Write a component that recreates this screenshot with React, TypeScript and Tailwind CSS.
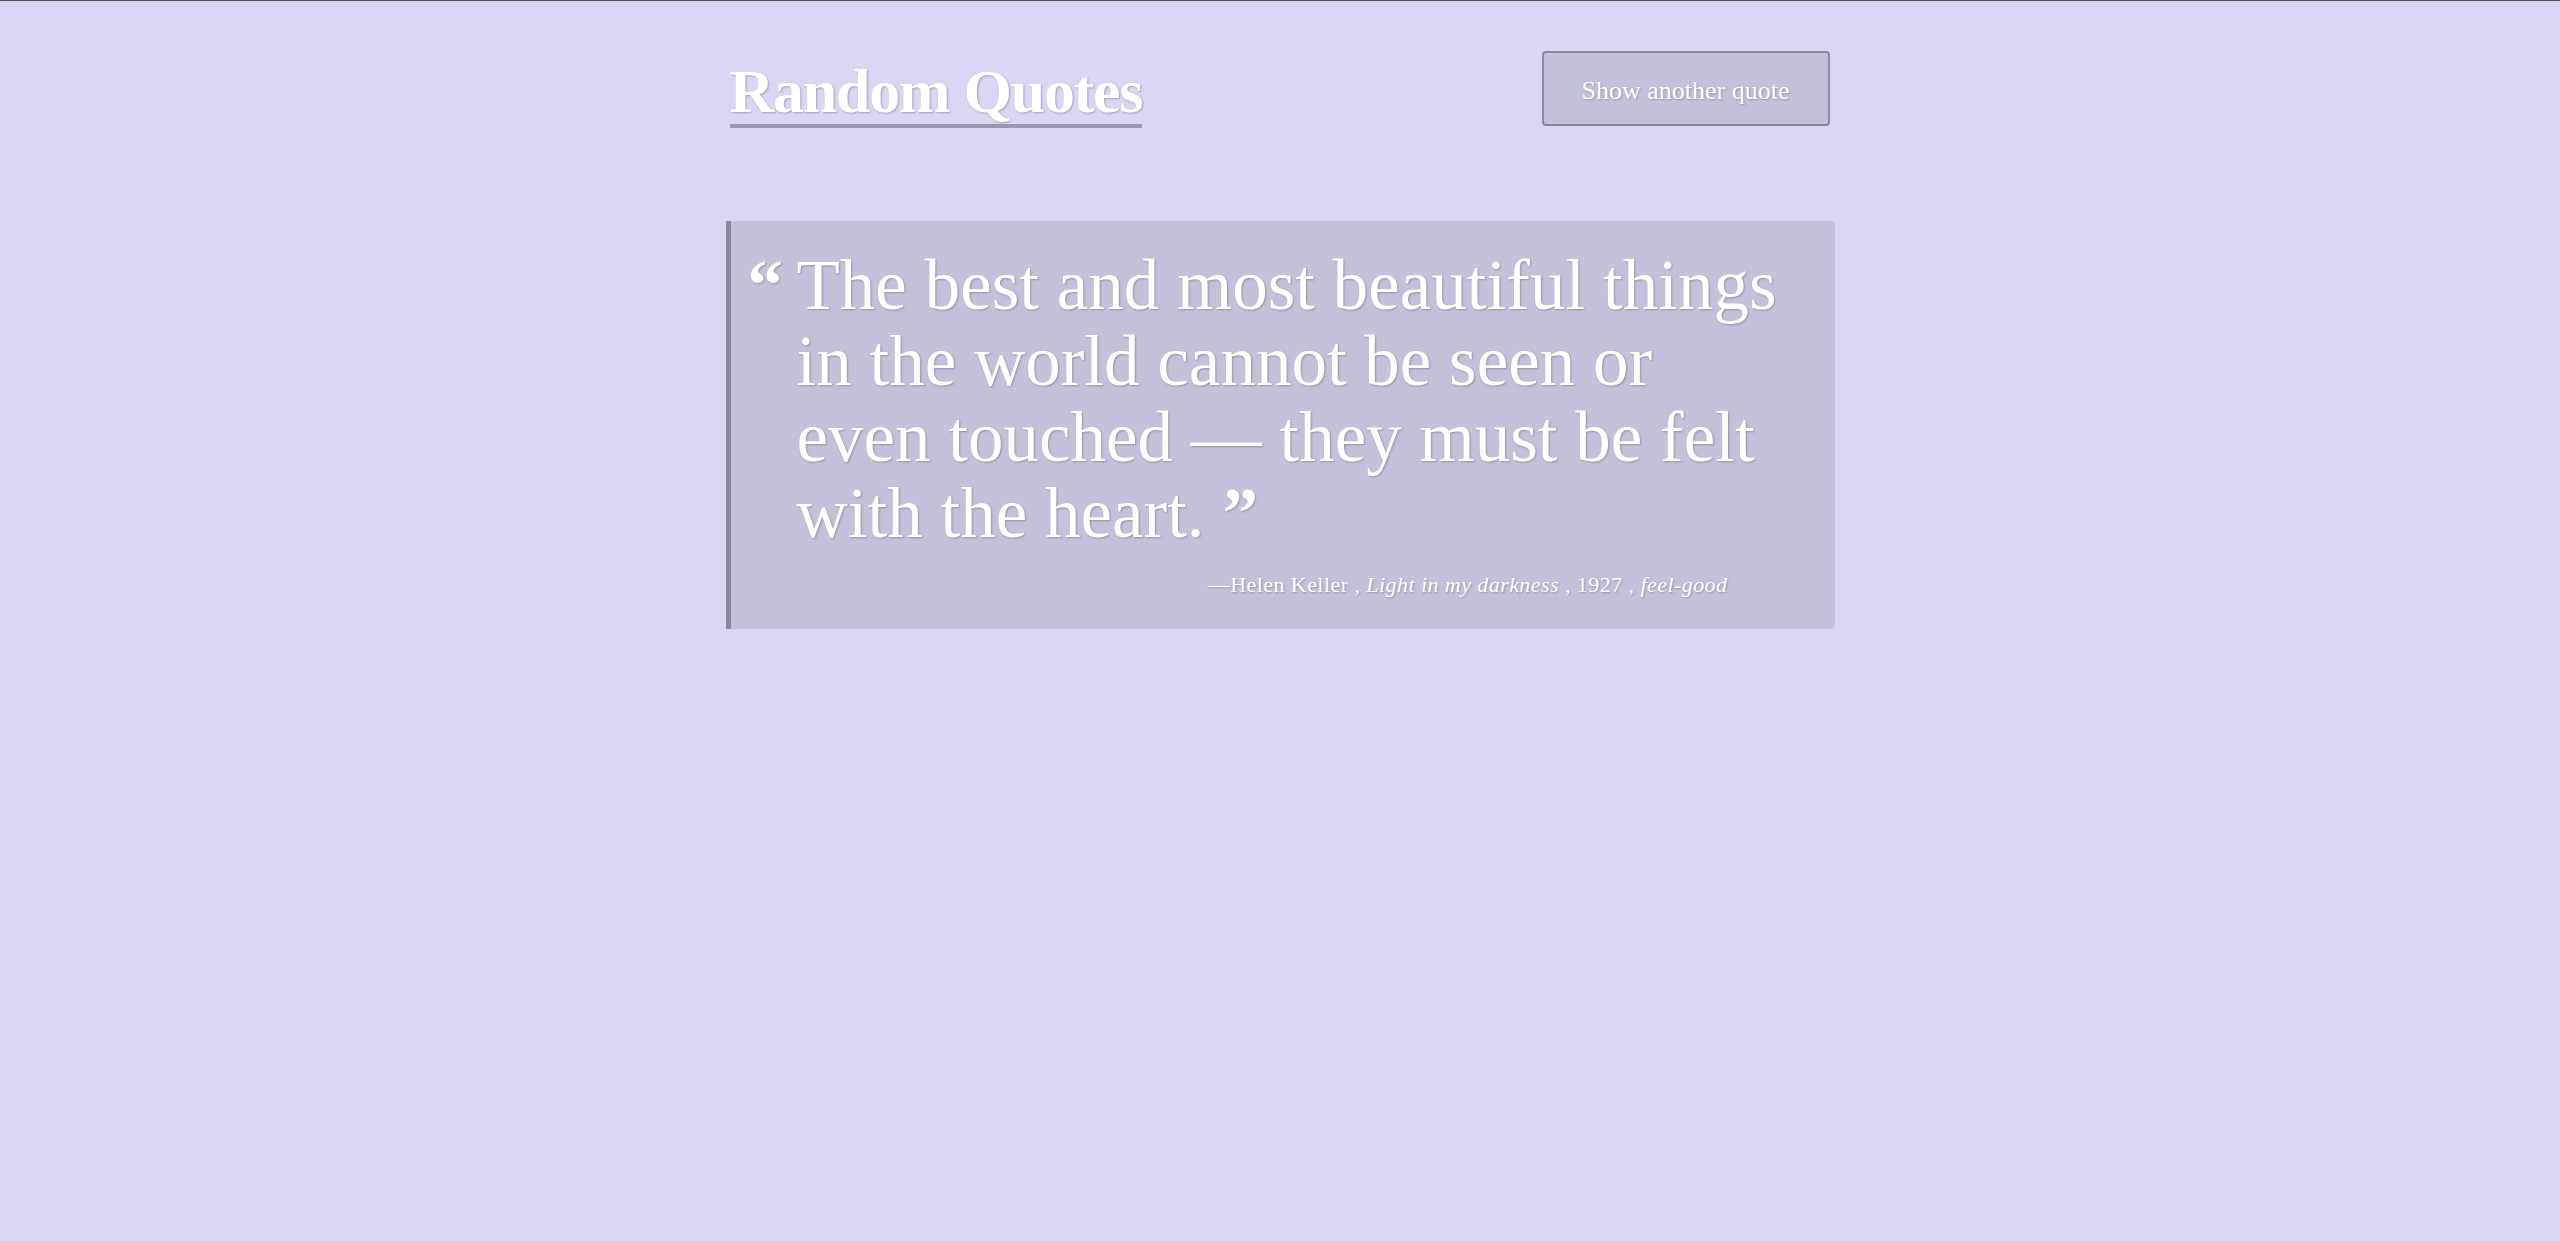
import React from 'react';

type Quote = {
  text: string;
  author: string;
  source: string;
  year: string;
  tag: string;
};

const quote: Quote = {
  text: 'The best and most beautiful things in the world cannot be seen or even touched — they must be felt with the heart.',
  author: 'Helen Keller',
  source: 'Light in my darkness',
  year: '1927',
  tag: 'feel-good',
};

const shadow = '[text-shadow:1px_1px_2px_rgba(60,55,90,0.35)]';

const QuoteBox = ({ text, author, source, year, tag }: Quote) => {
  return (
    <div className="mt-[93px] bg-[#c4c1da] border-l-[5px] border-[#8a879c] rounded-r-[4px] pl-[17px] pr-[40px] pt-[26px] pb-[29px]">
      <div className="flex">
        <span className={`w-[49px] shrink-0 text-[71px] leading-[76px] font-bold text-white ${shadow}`}>“</span>
        <p className={`text-[71px] leading-[76px] text-white ${shadow}`}>
          {text} <span className="font-bold">”</span>
        </p>
      </div>
      <p className={`mt-[19px] mr-[67px] text-right text-[22px] leading-[30px] tracking-[0.02em] text-white ${shadow}`}>
        —{author} , <em>{source}</em> , {year} , <em>{tag}</em>
      </p>
    </div>
  );
};

export default function App() {
  return (
    <div className="min-h-screen bg-[#dbd6f3] border-t border-[#4d4d4d] font-['Liberation_Serif',serif]">
      <div className="w-[1109px] mx-auto pt-[50px]">
        <header className="flex items-end justify-between">
          <h1
            className={`ml-[4px] text-[62px] leading-[66px] font-bold tracking-[-0.02em] text-white border-b-4 border-[#9b97ae] ${shadow}`}
          >
            Random Quotes
          </h1>
          <button
            className={`mr-[5px] mb-[2px] w-[288px] h-[75px] pt-[3px] bg-[#c4c1da] border-2 border-[#8c899e] rounded-[4px] text-[26px] text-white ${shadow}`}
          >
            Show another quote
          </button>
        </header>
        <QuoteBox {...quote} />
      </div>
    </div>
  );
}
